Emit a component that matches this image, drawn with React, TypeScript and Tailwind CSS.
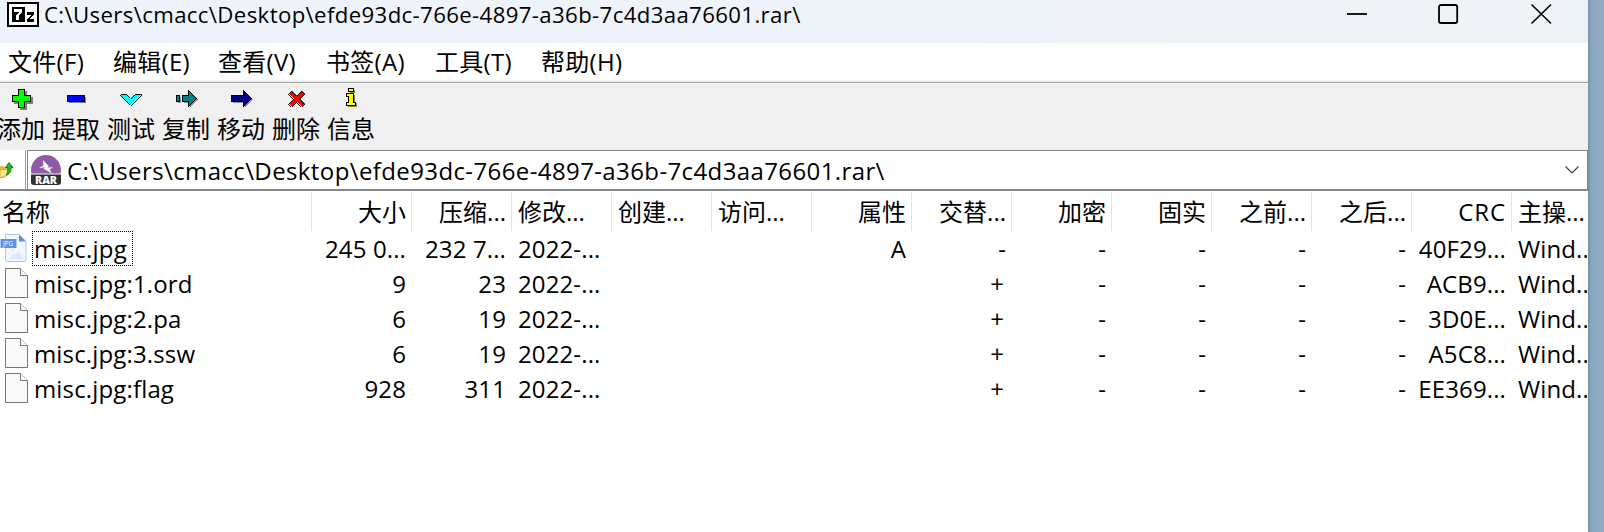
import type { ReactNode } from "react";

const PATH = "C:\\Users\\cmacc\\Desktop\\efde93dc-766e-4897-a36b-7c4d3aa76601.rar\\";

const MENUS = [
  { label: "文件(F)", width: "w-[105px]" },
  { label: "编辑(E)", width: "w-[105px]" },
  { label: "查看(V)", width: "w-[108px]" },
  { label: "书签(A)", width: "w-[109px]" },
  { label: "工具(T)", width: "w-[106px]" },
  { label: "帮助(H)", width: "w-[110px]" },
];

const TOOLS: { label: string; icon: ReactNode }[] = [
  {
    label: "添加",
    icon: (
      <>
        <path d="M12 5h7v6h6v7h-6v6h-7v-6H6v-7h6z" fill="#808080" />
        <path d="M10.5 3.500h6v6h6v6h-6v6h-6v-6h-6v-6h6z" fill="#00ff00" stroke="#000" />
      </>
    ),
  },
  {
    label: "提取",
    icon: (
      <>
        <path d="M6 11h17v6H6z" fill="#808080" />
        <path d="M4.500 9.500h17v6h-17z" fill="#0000ff" stroke="#000" />
      </>
    ),
  },
  {
    label: "测试",
    icon: <path d="M2.500 8.500h6.500l3.500 3.500 4-3.500h7L12.500 19z" fill="#00ffff" stroke="#000" strokeWidth="0.9" />,
  },
  {
    label: "复制",
    icon: (
      <>
        <path d="M5 11h3v6H5zM11 11h6V6l8 7-8 9v-5h-6z" fill="#909090" />
        <path d="M3.500 9.500h3v6h-3zM9.500 9.500h6v-5l8 8-8 8v-5h-6z" fill="#008080" stroke="#000" />
      </>
    ),
  },
  {
    label: "移动",
    icon: (
      <>
        <path d="M5 11h12V6l8 7-8 9v-5H5z" fill="#909090" />
        <path d="M3.500 9.500h12v-5l8 8-8 8v-5h-12z" fill="#000080" stroke="#000" />
      </>
    ),
  },
  {
    label: "删除",
    icon: (
      <path
        d="M8.500 4.500l5 5 5-5 3 3-5 5 5 5-3 3-5-5-5 5-3-3 5-5-5-5z"
        fill="#ff0000"
        stroke="#000"
        strokeWidth="0.9"
      />
    ),
  },
  {
    label: "信息",
    icon: (
      <>
        <path d="M12 4h5v3h-5zM10 9h7v8h2v4H10z" fill="#808080" />
        <path d="M10.500 2.500h5v3h-5zM8.500 7.500h7v9h2v3h-9v-3h2v-6h-2z" fill="#ffff00" stroke="#000" />
      </>
    ),
  },
];

const COLUMNS = [
  { title: "大小", right: true },
  { title: "压缩...", right: true },
  { title: "修改...", right: false },
  { title: "创建...", right: false },
  { title: "访问...", right: false },
  { title: "属性", right: true },
  { title: "交替...", right: true },
  { title: "加密", right: true },
  { title: "固实", right: true },
  { title: "之前...", right: true },
  { title: "之后...", right: true },
  { title: "CRC", right: true },
  { title: "主操...", right: false },
];

const FILES = [
  { name: "misc.jpg", cells: ["245 0...", "232 7...", "2022-...", "", "", "A", "-", "-", "-", "-", "-", "40F29...", "Wind..."] },
  { name: "misc.jpg:1.ord", cells: ["9", "23", "2022-...", "", "", "", "+", "-", "-", "-", "-", "ACB9...", "Wind..."] },
  { name: "misc.jpg:2.pa", cells: ["6", "19", "2022-...", "", "", "", "+", "-", "-", "-", "-", "3D0E...", "Wind..."] },
  { name: "misc.jpg:3.ssw", cells: ["6", "19", "2022-...", "", "", "", "+", "-", "-", "-", "-", "A5C8...", "Wind..."] },
  { name: "misc.jpg:flag", cells: ["928", "311", "2022-...", "", "", "", "+", "-", "-", "-", "-", "EE369...", "Wind..."] },
];

function SevenZipIcon() {
  return (
    <svg width="32" height="25" viewBox="0 0 32 25" className="shrink-0" shapeRendering="crispEdges">
      <path d="M0 0h32v25H0z" fill="#000" />
      <path d="M2 2h28v21H2z" fill="#fff" />
      <path d="M5 5h13v15H5z" fill="#000" />
      <path d="M7 7h8v3l-3 4v4H9v-4l3-4H7z" fill="#fff" />
      <path d="M20 10h7v2l-4 5h4v3h-7v-3l4-4h-4z" fill="#000" />
    </svg>
  );
}

function UpFolderIcon() {
  return (
    <svg width="14" height="16" viewBox="0 0 14 16" className="shrink-0">
      <path d="M0 4.500l3-1 1 1.500h4v8l-5 3H0z" fill="#e8b93c" />
      <path d="M0 8l10-1-2 6-7 2.500H0z" fill="#ffe48c" stroke="#c99a20" strokeWidth="0.7" />
      <path d="M9 .5l4 5h-2c.3 4-1 6.500-5 7.500 2-2.500 2-4.500 1.700-7.500H5.500z" fill="#2fb52f" stroke="#0c7410" strokeWidth="0.9" />
    </svg>
  );
}

function RarIcon() {
  return (
    <svg width="30" height="30" viewBox="0 0 30 30" className="shrink-0">
      <circle cx="15" cy="15" r="15" fill="#8f5ba4" />
      <path d="M0 18.500h30V30H0z" fill="#fff" />
      <path d="M12 5l5.800 6.300-1.300 1.200 5.500-.3-3.300 2.300 2.300 4-8.500-4.700 1.200-1.300-5.700.3 4.500-2.300z" fill="#fff" />
      <path d="M0 19.500h30v7.500q0 3-3 3H3q-3 0-3-3z" fill="#303030" />
      <text x="15" y="28.500" textAnchor="middle" textLength="22" lengthAdjust="spacingAndGlyphs" fontFamily="Open Sans, sans-serif" fontWeight="800" fontSize="10.500" fill="#fff">
        RAR
      </text>
    </svg>
  );
}

function JpgIcon() {
  return (
    <svg width="27" height="30" viewBox="0 0 27 30" className="shrink-0">
      <path d="M5.500 1.500h13.500l7 7v18a2 2 0 0 1-2 2H7.500a2 2 0 0 1-2-2z" fill="#f3f8ff" stroke="#a9c7f5" />
      <path d="M19 1.500l7 7h-7z" fill="#5590e6" />
      <circle cx="12.500" cy="17.500" r="1.500" fill="#e0ebfd" />
      <path d="M9 26l4-5 2 1 3-4 6 8z" fill="#dde9fc" />
      <path d="M.5 6h16v9H.5z" fill="#5c93e8" />
      <text x="8" y="13" textAnchor="middle" textLength="10" lengthAdjust="spacingAndGlyphs" fontFamily="Open Sans, sans-serif" fontSize="7" fill="#fff">
        JPG
      </text>
    </svg>
  );
}

function BlankFileIcon() {
  return (
    <svg width="24" height="30" viewBox="0 0 24 30" className="shrink-0">
      <path d="M.5.500h15l7 7v22H.5z" fill="#fafafa" stroke="#777" />
      <path d="M15.500.500v7h7" fill="#fff" stroke="#777" />
    </svg>
  );
}

export default function App() {
  return (
    <div className="flex h-[532px] w-[1604px] overflow-hidden bg-[#8ba8c0] font-['Open_Sans','Noto_Sans_CJK_SC',sans-serif] text-[24px] leading-[35px] whitespace-nowrap text-black">
      <div className="flex w-[1588px] shrink-0 flex-col bg-white">
        <header className="flex h-[43px] shrink-0 items-start justify-between bg-gradient-to-r from-[#eff3fb] to-[#eef3f8] pl-[7px]">
          <div className="flex pt-[2px]">
            <SevenZipIcon />
            <span className="-mt-[5px] ml-[5px] text-[22.200px] tracking-[0.370px]">{PATH}</span>
          </div>
          <svg width="206" height="28" viewBox="0 0 206 28" className="mr-[36px] shrink-0" fill="none" stroke="#000" strokeWidth="1.800">
            <path d="M1 14h20" />
            <rect x="93" y="5" width="18.200" height="18" rx="2" />
            <path d="M185.500 4.500l19.500 19M205 4.500l-19.500 19" strokeWidth="1.600" />
          </svg>
        </header>

        <nav className="flex h-[37px] shrink-0 items-center pl-[8px]">
          {MENUS.map((m) => (
            <span key={m.label} className={`${m.width} shrink-0 tracking-[0.300px]`}>
              {m.label}
            </span>
          ))}
        </nav>

        <div className="h-[4px] shrink-0 border-t-2 border-b border-t-[#f0f0f0] border-b-white bg-[#a0a0a0]" />

        <div className="flex h-[66px] shrink-0 bg-[#f0f0f0]">
          <div className="-ml-[6px] flex">
            {TOOLS.map((t) => (
              <div key={t.label} className="flex w-[55px] flex-col">
                <svg width="28" height="28" viewBox="-1 0 28 28" className="mt-[2px] ml-[13px]" shapeRendering="crispEdges">
                  {t.icon}
                </svg>
                <span className="-mt-[3px] pl-[3px]">{t.label}</span>
              </div>
            ))}
          </div>
        </div>

        <div className="flex h-[41px] shrink-0 border-b-2 border-[#858790]">
          <div className="flex w-[26px] shrink-0 items-center border-r border-[#a0a0a0]">
            <UpFolderIcon />
          </div>
          <div className="ml-[1px] flex grow items-center border-t border-r border-l border-[#858585] pr-[8px] pl-[3px]">
            <RarIcon />
            <span className="ml-[6px] tracking-[0.390px]">{PATH}</span>
            <svg width="14" height="8" viewBox="0 0 14 8" className="ml-auto" fill="none" stroke="#444" strokeWidth="1.200">
              <path d="M.5.500l6.500 6.500 6.500-6.500" />
            </svg>
          </div>
        </div>

        <div className="flex h-[40px] shrink-0 pt-[1px]">
          <div className="w-[312px] shrink-0 border-r border-[#e3e3e3] pl-[2px] leading-[39px]">名称</div>
          {COLUMNS.map((c) => (
            <div
              key={c.title}
              className={`w-[100px] shrink-0 overflow-hidden border-r border-[#e3e3e3] px-[5px] leading-[39px] last:w-[76px] last:border-r-0 last:pr-0 ${c.right ? "text-right" : "pl-[6px]"} ${c.title === "CRC" ? "tracking-[0.900px]" : ""}`}
            >
              {c.title}
            </div>
          ))}
        </div>

        {FILES.map((f, i) => (
          <div key={f.name} className="flex h-[35px] shrink-0">
            <div className="flex w-[312px] shrink-0 items-start">
              <div className={i === 0 ? "w-[32px] pt-[2px]" : "w-[32px] pt-[2px] pl-[5px]"}>
                {i === 0 ? <JpgIcon /> : <BlankFileIcon />}
              </div>
              <span className={i === 0 ? "h-[35px] w-[101px] border border-dotted border-black pl-[1px] leading-[33px] tracking-[0.200px]" : "pl-[2px] tracking-[0.150px]"}>
                {f.name}
              </span>
            </div>
            {f.cells.map((cell, j) => (
              <div
                key={COLUMNS[j].title}
                className={`w-[100px] shrink-0 overflow-hidden tracking-[0.120px] last:w-[75px] last:pr-0 ${cell === "+" ? "pr-[8px]" : "pr-[6px]"} ${COLUMNS[j].right ? "text-right" : "pl-[6px]"}`}
              >
                {cell}
              </div>
            ))}
          </div>
        ))}
      </div>
      <div className="w-[2px] shrink-0 bg-[#7f94a6]" />
      <div className="grow bg-gradient-to-r from-[#86a7c2] to-[#93abc1]" />
    </div>
  );
}
